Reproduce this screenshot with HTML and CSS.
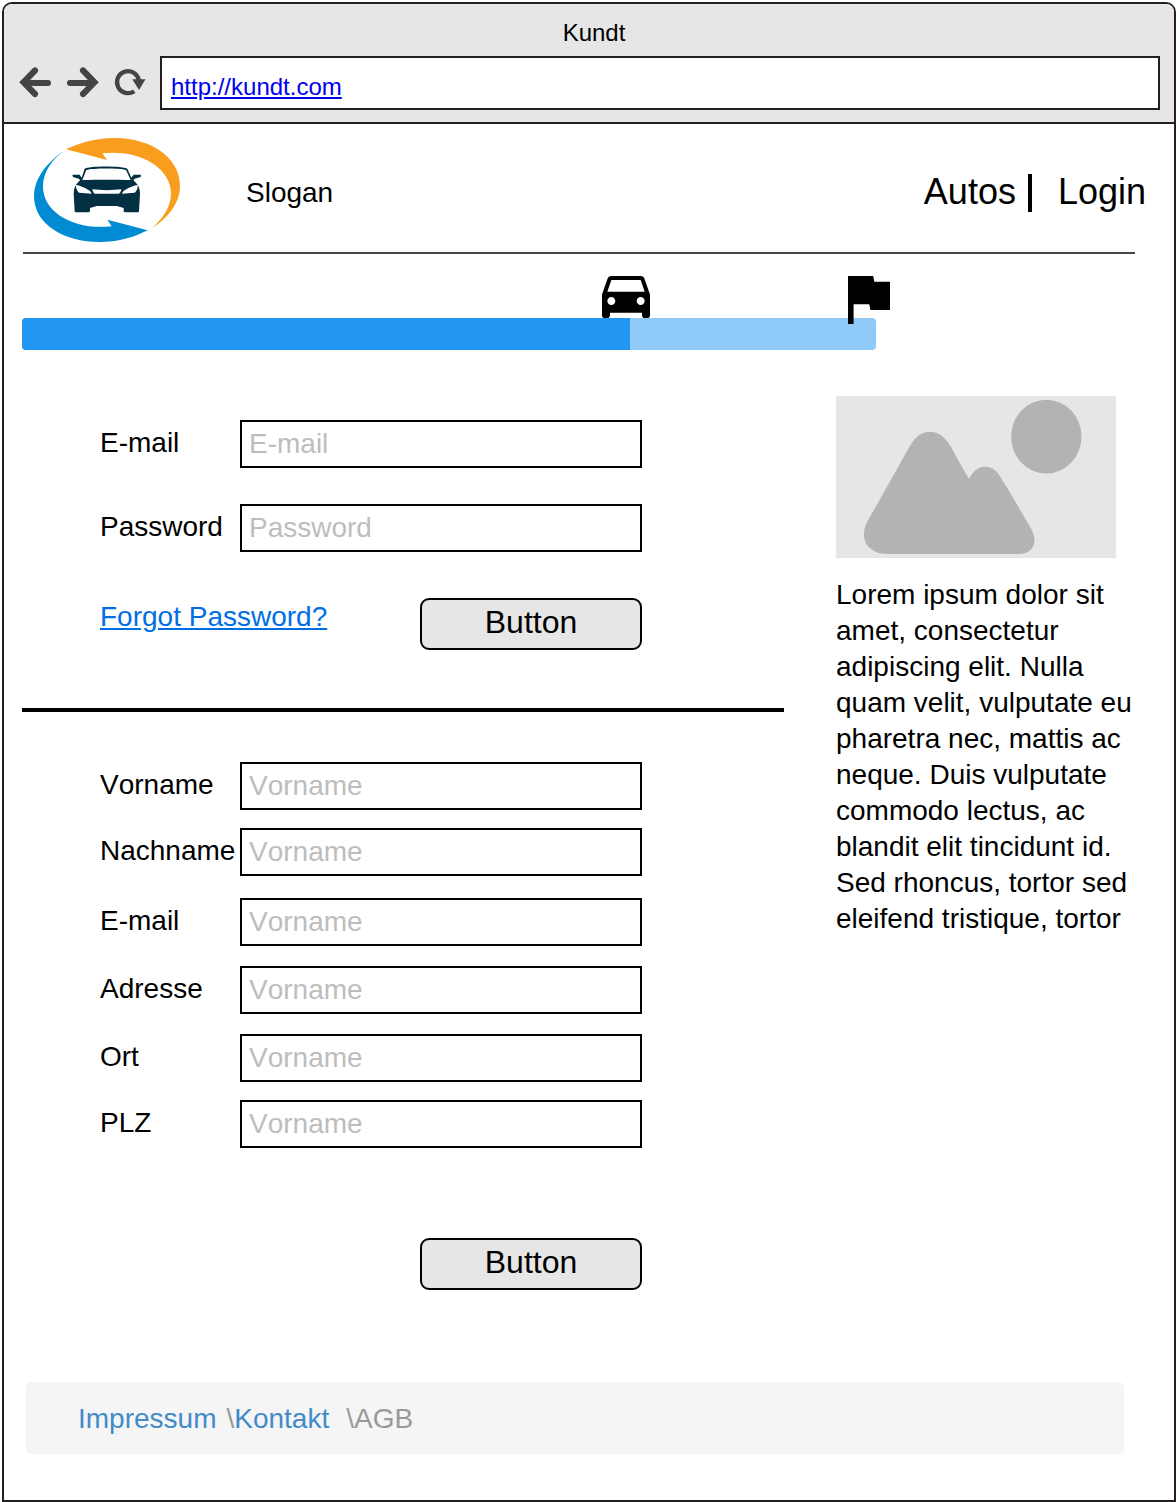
FILE: index.html
```html
<!DOCTYPE html>
<html lang="de">
<head>
<meta charset="utf-8">
<title>Kundt</title>
<link rel="stylesheet" href="styles.css">
</head>
<body>
<div class="browser">
  <div class="chrome">
    <div class="chrome-title">Kundt</div>
    <div class="toolbar">
      <svg class="nav-icons" width="156" height="54" viewBox="4 56 156 54" fill="none" stroke="#444">
        <path d="M48 83H25M35 70.500L23.500 82.300L35 94" stroke-width="6.100" stroke-linecap="round"/>
        <path d="M70 83H93M83 70.500L94.500 82.300L83 94" stroke-width="6.100" stroke-linecap="round"/>
        <path d="M134.300 91.200A11 11 0 1 1 138.800 80" stroke-width="4.300"/>
        <path d="M132.300 79.300H145.500L139 90Z" fill="#444" stroke="none"/>
      </svg>
      <div class="address"><a href="#">http://kundt.com</a></div>
    </div>
  </div>

  <div class="page">
    <header class="header">
      <svg class="logo" width="146" height="104" viewBox="42 39 438 312">
        <path fill="#f99d1f" d="M138 73C185 51 230 39 285 39C395 40 480 98 480 183C480 235 444 278 396 310C433 277 453 241 453 205C453 132 365 72 247 85L261 105Z"/>
        <path fill="#018bd3" d="M130 79C82 112 42 160 42 213C42 298 132 351 239 351C293 351 340 338 383 316L262 284L275 304C155 316 69 258 69 185C69 145 92 107 130 79Z"/>
        <g fill="#022f41">
          <path fill-rule="evenodd" d="M194 131C205 122 310 122 322 131L334 158L341 149L363 149L362 156L344 161L340 166C354 177 360 190 360 206L357 259Q357 262 353 262H316Q312 262 311 258V249L290 243H231L210 249V258Q209 262 205 262H168Q164 262 164 259L161 206C161 190 167 177 180 166L177 161L159 156L157 149L179 149L185 158ZM199 135L187 165C225 164 292 164 332 165L318 135C300 129 218 129 199 135ZM168 179C167 187 171 199 178 203L215 206C212 196 198 188 168 179ZM353 179C322 188 309 196 306 206L343 203C351 199 354 187 353 179ZM217 193Q219 205 225 206H296Q302 205 304 193Q260 198 217 193Z"/>
        </g>
      </svg>
      <div class="slogan">Slogan</div>
      <nav class="nav">
        <span>Autos</span>
        <span class="nav-bar"></span>
        <span>Login</span>
      </nav>
    </header>

    <div class="progress">
      <div class="progress-fill"></div>
      <svg class="car" width="48" height="42" viewBox="3 5 18 16" preserveAspectRatio="none"><path d="M18.920 6.010C18.720 5.420 18.160 5 17.500 5h-11c-.66 0-1.210.42-1.420 1.010L3 12v8c0 .55.45 1 1 1h1c.55 0 1-.45 1-1v-1h12v1c0 .55.45 1 1 1h1c.55 0 1-.45 1-1v-8l-2.080-5.990zM6.500 16c-.83 0-1.500-.67-1.500-1.500S5.670 13 6.500 13s1.500.67 1.500 1.500S7.330 16 6.500 16zm11 0c-.83 0-1.500-.67-1.500-1.500s.67-1.500 1.500-1.500 1.500.67 1.500 1.500-.67 1.500-1.500 1.500zM5 11l1.500-4.500h11L19 11H5z"/></svg>
      <svg class="flag" width="42" height="48" viewBox="5 4 15 17" preserveAspectRatio="none"><path d="M14.400 6L14 4H5v17h2v-7h5.600l.4 2h7V6z"/></svg>
    </div>

    <div class="columns">
      <main class="main">
        <form class="form login">
          <label class="row"><span>E-mail</span><input placeholder="E-mail"></label>
          <label class="row"><span>Password</span><input placeholder="Password"></label>
          <div class="actions">
            <a class="forgot" href="#">Forgot Password?</a>
            <button class="button" type="button">Button</button>
          </div>
        </form>
        <form class="form register">
          <label class="row"><span>Vorname</span><input placeholder="Vorname"></label>
          <label class="row"><span>Nachname</span><input placeholder="Vorname"></label>
          <label class="row"><span>E-mail</span><input placeholder="Vorname"></label>
          <label class="row"><span>Adresse</span><input placeholder="Vorname"></label>
          <label class="row"><span>Ort</span><input placeholder="Vorname"></label>
          <label class="row"><span>PLZ</span><input placeholder="Vorname"></label>
          <button class="button" type="button">Button</button>
        </form>
      </main>
      <aside class="aside">
        <svg width="280" height="162" viewBox="0 0 280 162">
          <rect width="280" height="162" fill="#e6e6e6"/>
          <g fill="#b3b3b3">
            <ellipse cx="210.300" cy="40.700" rx="35.200" ry="36.900"/>
            <path d="M52 158C34 158 28 147 28 139C28 132 30 128 32.700 123.300L73.300 51C80 39 87 35.700 94 35.700C102 35.700 110 41 116 52.700C122 64 127 73 133 82.700C138 74 143 70.800 148.700 70.800C155 70.800 159 73 163.300 79.300C174 96 184 114 194 130.700C197 136 198.500 140 198.500 144.300C198.500 152 193 158 183 158Z"/>
          </g>
        </svg>
        <p>Lorem ipsum dolor sit amet, consectetur adipiscing elit. Nulla quam velit, vulputate eu pharetra nec, mattis ac neque. Duis vulputate commodo lectus, ac blandit elit tincidunt id. Sed rhoncus, tortor sed eleifend tristique, tortor</p>
      </aside>
    </div>

    <footer class="footer">
      <a href="#">Impressum</a>
      <span class="crumb">\<a href="#">Kontakt</a></span>
      <span class="crumb last">\AGB</span>
    </footer>
  </div>
</div>
</body>
</html>
```
FILE: styles.css
```css
* {
  box-sizing: border-box;
}

body {
  margin: 0;
  padding: 2px 0 0 2px;
  background: #fff;
  color: #000;
  font: 28px/36px "Liberation Sans", Arial, sans-serif;
}

.browser {
  height: 1500px;
  border: 2px solid #231f20;
  border-radius: 10px 10px 0 0;
  overflow: hidden;
}

.chrome {
  height: 120px;
  border-bottom: 2px solid #231f20;
  background: #e6e6e6;
}

.chrome-title {
  height: 52px;
  padding-top: 11px;
  padding-left: 10px;
  font-size: 24px;
  text-align: center;
}

.toolbar {
  display: flex;
  padding-right: 14px;
}

.address {
  flex: 1;
  height: 54px;
  padding: 11px 9px 0;
  border: 2px solid #231f20;
  background: #fff;
  font-size: 24px;
}

.address a {
  color: #0000ee;
}

.header {
  display: flex;
  align-items: flex-start;
  height: 130px;
  margin: 0 39px 0 19px;
  padding: 14px 0 0 11px;
  border-bottom: 2px solid #444;
}

.slogan {
  margin: 37px 0 0 66px;
}

.nav {
  display: flex;
  margin: 36px -11px 0 auto;
  font-size: 36px;
}

.nav-bar {
  width: 4px;
  height: 38px;
  margin: 0 26px 0 12px;
  background: #000;
}

.progress {
  position: relative;
  width: 854px;
  height: 32px;
  margin: 64px 0 0 18px;
  border-radius: 4px;
  background: #90caf9;
}

.progress-fill {
  width: 608px;
  height: 100%;
  border-radius: 4px 0 0 4px;
  background: #2196f3;
}

.car,
.flag {
  position: absolute;
  top: -42px;
}

.car {
  left: 580px;
}

.flag {
  left: 826px;
}

.columns {
  display: flex;
  gap: 52px;
  height: 1032px;
  margin-left: 18px;
}

.main {
  width: 762px;
}

.form {
  display: flex;
  flex-direction: column;
  padding-left: 78px;
  font-kerning: none;
}

.login {
  height: 362px;
  padding-top: 70px;
  gap: 36px;
  border-bottom: 4px solid #000;
}

.register {
  padding-top: 50px;
  gap: 20px;
}

.register .row:nth-child(2) {
  margin: -2px 0 2px;
}

.register .row:nth-child(6) {
  margin-top: -2px;
}

.row {
  display: grid;
  grid-template-columns: 140px 402px;
}

.row span {
  padding-top: 5px;
}

.row input {
  height: 48px;
  padding: 0 7px;
  border: 2px solid #000;
  border-radius: 0;
  background: #fff;
  font: inherit;
  font-kerning: none;
}

.row input::placeholder {
  color: #bdbdbd;
  opacity: 1;
}

.actions {
  display: flex;
  justify-content: space-between;
  width: 542px;
  margin-top: 10px;
}

.forgot {
  padding-top: 1px;
  color: #006ee5;
}

.button {
  width: 222px;
  height: 52px;
  padding: 0 0 4px;
  border: 2px solid #000;
  border-radius: 9px;
  background: #e6e6e6;
  color: #000;
  font: 32px "Liberation Sans", Arial, sans-serif;
}

.register .button {
  margin: 70px 0 0 320px;
}

.aside {
  width: 300px;
  padding-top: 46px;
}

.aside svg {
  display: block;
}

.aside p {
  margin: 19px 0 0;
}

.footer {
  display: flex;
  width: 1098px;
  height: 72px;
  margin-left: 22px;
  padding: 19px 52px 0;
  border-radius: 5px;
  background: #f5f5f5;
  color: #999;
}

.footer a {
  color: #428bca;
  text-decoration: none;
}

.crumb {
  margin-left: 10px;
}

.crumb.last {
  margin-left: 17px;
}
```
